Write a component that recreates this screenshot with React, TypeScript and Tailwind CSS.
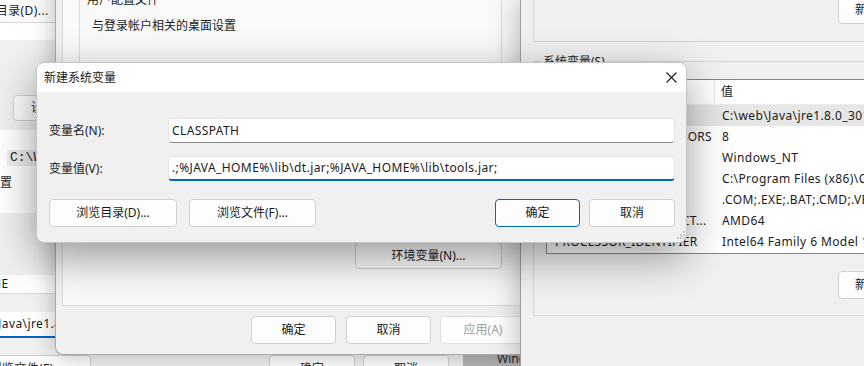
import React from 'react';

const ui = "font-['Noto_Sans','Noto_Sans_CJK_SC',sans-serif]";
// 拉丁文字比参考图的 Segoe UI 略窄，加一点字距
const lat = 'tracking-[0.4px]';

type BtnProps = {
  children: React.ReactNode;
  className?: string;
  primary?: boolean;
  disabled?: boolean;
};

const Btn = ({ children, className = '', primary = false, disabled = false }: BtnProps) => (
  <div
    className={`flex shrink-0 items-center justify-center rounded-[4px] border bg-[#fdfdfd] text-[12px] whitespace-nowrap ${
      primary ? 'border-[#0067c0]' : disabled ? 'border-[#e2e2e2]' : 'border-[#d0d0d0]'
    } ${disabled ? 'text-[#a0a0a0]' : 'text-[#1b1b1b]'} ${className}`}
  >
    {children}
  </div>
);

const rows = [
  ['JAVA_HOME', 'C:\\web\\Java\\jre1.8.0_301'],
  ['NUMBER_OF_PROCESSORS', '8'],
  ['OS', 'Windows_NT'],
  ['Path', 'C:\\Program Files (x86)\\Common Files\\Oracle\\Java\\javapath'],
  ['PATHEXT', '.COM;.EXE;.BAT;.CMD;.VBS;.VBE;.JS;.JSE;.WSF;.WSH;.MSC'],
  ['PROCESSOR_ARCHITECT...', 'AMD64'],
  ['PROCESSOR_IDENTIFIER', 'Intel64 Family 6 Model 140 Stepping 1, GenuineIntel'],
];

// 最底层：编辑环境变量窗口（只露出左侧一条）
const BackWindow = () => (
  <div className="absolute left-0 top-0 w-[463px] h-[366px] bg-[#f0f0f0] flex flex-col overflow-hidden">
    <div className="h-[23px] shrink-0 bg-[#fbfbfb] border-b border-[#d6d6d6] flex items-center">
      <span className={`-ml-[29px] whitespace-nowrap ${lat}`}>浏览目录(D)...</span>
    </div>
    <div className="h-[17px] shrink-0 bg-white" />
    <div className="h-[90px] shrink-0 pt-[55px] pl-[13px]">
      <Btn className="w-[86px] h-[26px] justify-start pl-[17px]">设置(T)...</Btn>
    </div>
    <div className="h-[83px] shrink-0 bg-white flex flex-col pt-[20px]">
      <div className="ml-[7px] w-fit rounded-[2px] bg-[#ececec] px-[3px] leading-[16px] font-['Liberation_Mono',monospace] text-[13px]">
        C:\Windows
      </div>
      <div className="-ml-[12px] mt-[9px] leading-[16px] whitespace-nowrap">设置</div>
    </div>
    <div className="h-[62px] shrink-0" />
    <div className="h-[19px] shrink-0 bg-white border-b border-[#dcdcdc] flex items-center">
      <span className={`-ml-[61px] whitespace-nowrap ${lat}`}>JAVA_HOME</span>
    </div>
    <div className="h-[18px] shrink-0" />
    <div className="h-[26px] shrink-0 bg-white border-b-2 border-[#0067c0] flex items-center">
      <span className={`-ml-[48px] whitespace-nowrap ${lat}`}>C:\web\Java\jre1.8.0_301</span>
    </div>
    <div className="h-[17px] shrink-0" />
    <div className="flex shrink-0">
      <Btn className={`-ml-[37px] w-[128px] h-[28px] ${lat}`}>浏览文件(F)...</Btn>
      <Btn className="ml-[178px] w-[86px] h-[28px]">确定</Btn>
      <Btn className="ml-[8px] w-[86px] h-[28px]">取消</Btn>
    </div>
  </div>
);

// 系统属性窗口
const SystemProperties = () => (
  <div className="absolute left-[55px] top-[-40px] w-[480px] h-[395px] bg-[#f0f0f0] border-l border-b border-[#a9a9a9] rounded-bl-[8px] shadow-[0_0_24px_rgba(0,0,0,0.28)] flex flex-col">
    <div className="ml-[6px] mr-[6px] h-[346px] shrink-0 border-l border-r border-b border-[#d9d9d9] bg-[#f9f9f9] pl-[16px] flex flex-col">
      <div className="mt-[39px] w-[423px] h-[80px] shrink-0 border border-[#dcdcdc] flex flex-col">
        <div className="-mt-[8px] ml-[6px] w-fit px-[1px] bg-[#f9f9f9] leading-[16px]">用户配置文件</div>
        <div className="mt-[10px] ml-[12px] leading-[16px]">与登录帐户相关的桌面设置</div>
      </div>
      <div className="mt-[40px] w-[423px] h-[80px] shrink-0 border border-[#dcdcdc]" />
      <div className="w-[423px] mt-[43px] flex justify-end">
        <Btn className="w-[147px] h-[27px]">环境变量(N)...</Btn>
      </div>
    </div>
    <div className="mt-[10px] pl-[195px] flex">
      <Btn className="w-[85px] h-[28px]">确定</Btn>
      <Btn className="ml-[10px] w-[85px] h-[28px]">取消</Btn>
      <Btn disabled className="ml-[9px] w-[86px] h-[28px]">应用(A)</Btn>
    </div>
  </div>
);

// 环境变量窗口
const EnvVariables = () => (
  <div className="absolute left-[520px] top-0 w-[400px] h-[366px] bg-[#f0f0f0] border-l border-[#9c9c9c] shadow-[0_0_28px_rgba(0,0,0,0.3)] flex flex-col">
    <div className="ml-[12px] h-[42px] shrink-0 border-l border-b border-[#d5d5d5] flex items-end pb-[17px]">
      <Btn className="ml-[304px] w-[86px] h-[28px]">新建(W)...</Btn>
    </div>
    <div className="ml-[12px] mt-[19px] h-[255px] shrink-0 border-l border-t border-b border-[#d5d5d5] flex flex-col">
      <div className="-mt-[8px] ml-[7px] w-fit px-[2px] bg-[#f0f0f0] leading-[16px]">系统变量(S)</div>
      <div className="mt-[9px] ml-[12px] h-[175px] shrink-0 border border-[#82878f] bg-white flex flex-col">
        <div className="h-[25px] shrink-0 flex border-b border-[#ececec]">
          <div className="w-[168px] shrink-0 border-r border-[#e5e5e5] pl-[8px] flex items-center">变量</div>
          <div className="pl-[6px] flex items-center">值</div>
        </div>
        {rows.map(([name, value], i) => (
          <div key={name} className={`h-[21px] shrink-0 flex items-center whitespace-nowrap ${i === 0 ? 'bg-[#e6e6e6]' : ''}`}>
            <div className="w-[169px] shrink-0 pl-[8px] overflow-hidden tracking-[0.25px]">{name}</div>
            <div className={`pl-[6px] ${lat}`}>{value}</div>
          </div>
        ))}
      </div>
      <Btn className="mt-[17px] ml-[304px] w-[86px] h-[28px]">新建(W)...</Btn>
    </div>
  </div>
);

const Field = ({ value, focused = false }: { value: string; focused?: boolean }) => (
  <div
    className={`flex-1 h-[25px] rounded-[4px] bg-white border border-[#e3e3e3] flex items-center pl-[3px] overflow-hidden whitespace-nowrap ${lat} ${
      focused ? 'border-b-2 border-b-[#0067c0]' : 'border-b-[#8a8a8a]'
    }`}
  >
    {value}
  </div>
);

// 新建系统变量对话框
const NewVariableDialog = () => (
  <div className="absolute left-[36px] top-[62px] w-[651px] h-[181px] rounded-[8px] overflow-hidden bg-[#f0f0f0] border border-[#c4c4c4] shadow-[0_14px_44px_rgba(0,0,0,0.4)] flex flex-col">
    <div className="h-[29px] shrink-0 bg-white flex items-center justify-between pl-[7px] pr-[9px]">
      <span>新建系统变量</span>
      <svg width="11" height="11" viewBox="0 0 11 11">
        <path d="M0.5 0.5 L10.5 10.5 M10.5 0.5 L0.5 10.5" stroke="#1b1b1b" strokeWidth="1.1" />
      </svg>
    </div>
    <div className="flex-1 flex flex-col pl-[12px] pr-[11px] pt-[26px] relative">
      <div className="flex items-center">
        <div className="w-[119px] shrink-0">变量名(N):</div>
        <Field value="CLASSPATH" />
      </div>
      <div className="flex items-center mt-[13px]">
        <div className="w-[119px] shrink-0">变量值(V):</div>
        <Field focused value=".;%JAVA_HOME%\lib\dt.jar;%JAVA_HOME%\lib\tools.jar;" />
      </div>
      <div className="flex mt-[18px]">
        <Btn className="w-[128px] h-[28px]">浏览目录(D)...</Btn>
        <Btn className="ml-[12px] w-[127px] h-[28px]">浏览文件(F)...</Btn>
        <div className="flex-1" />
        <Btn primary className="w-[85px] h-[28px]">确定</Btn>
        <Btn className="ml-[9px] w-[86px] h-[28px]">取消</Btn>
      </div>
      <svg width="10" height="10" viewBox="0 0 10 10" className="absolute right-[1px] bottom-[1px]">
        {[
          [8, 0], [8, 3], [5, 3], [8, 6], [5, 6], [2, 6],
        ].map(([x, y]) => (
          <rect key={`${x}-${y}`} x={x} y={y} width="2" height="2" fill="#c8c8c8" />
        ))}
      </svg>
    </div>
  </div>
);

export default function App() {
  return (
    <div className={`relative w-[864px] h-[366px] overflow-hidden bg-[#b4b4b4] text-[12px] text-[#1b1b1b] ${ui}`}>
      <div className="absolute left-[497px] top-[350px] text-[#2a2a2a]">Windows</div>
      <BackWindow />
      <SystemProperties />
      <EnvVariables />
      <NewVariableDialog />
    </div>
  );
}
